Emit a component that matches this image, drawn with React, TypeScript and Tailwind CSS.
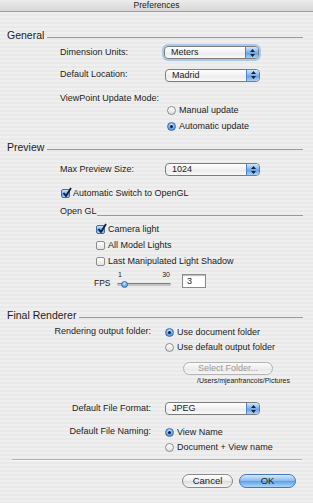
import clsx from "clsx";

function Section({ title }: { title: string }) {
  return (
    <div className="flex h-[14px] items-center pl-[7px] pr-[10px]">
      <span className="text-[10.5px] leading-[14px]">{title}</span>
      <div className="ml-[3px] mt-[5px] h-px flex-1 bg-[#9a9a9a]" />
    </div>
  );
}

function Select({ value, focused }: { value: string; focused?: boolean }) {
  return (
    <div
      className={clsx(
        "flex h-[13px] w-[95px] overflow-hidden rounded-[4px] border border-[#7c7c7c] bg-[linear-gradient(#ffffff,#f1f1f1_50%,#e9e9e9_51%,#fafafa)]",
        focused && "shadow-[0_0_0_2px_#a8c8ec]"
      )}
    >
      <span className="flex-1 pl-[6px] text-[9px] leading-[11px]">{value}</span>
      <span className="flex w-[13px] items-center justify-center rounded-r-[3px] border-l border-[#4f82c6] bg-[linear-gradient(#d3e7fb,#79b0ec_50%,#5b9be4_51%,#a9d2f7)]">
        <svg width="5" height="8" viewBox="0 0 5 8">
          <path d="M2.5 0 L5 3 L0 3 Z M0 5 L5 5 L2.5 8 Z" fill="#13233f" />
        </svg>
      </span>
    </div>
  );
}

function Radio({ checked, label }: { checked?: boolean; label: string }) {
  return (
    <div className="flex items-center gap-[3px]">
      <span
        className={clsx(
          "flex h-[9px] w-[9px] items-center justify-center rounded-full border",
          checked
            ? "border-[#3b6db3] bg-[radial-gradient(circle_at_50%_30%,#d2e6fb,#6ca6e6_55%,#3f83d4)]"
            : "border-[#8d8d8d] bg-[linear-gradient(#ffffff,#dedede)]"
        )}
      >
        {checked && <span className="h-[3px] w-[3px] rounded-full bg-[#0e1d3a]" />}
      </span>
      <span className="leading-[12px]">{label}</span>
    </div>
  );
}

function Check({ checked, label }: { checked?: boolean; label: string }) {
  return (
    <div className="flex items-center gap-[3px]">
      <span
        className={clsx(
          "relative h-[9px] w-[9px] rounded-[2px] border",
          checked
            ? "border-[#3b6db3] bg-[linear-gradient(#d2e6fb,#78aeea_50%,#5a99e2_51%,#a6cff5)]"
            : "border-[#8d8d8d] bg-[linear-gradient(#ffffff,#e4e4e4)]"
        )}
      >
        {checked && (
          <svg className="absolute -top-[3px] left-0" width="10" height="11" viewBox="0 0 10 11">
            <path d="M1.5 6 L4 9 L9 1" stroke="#0f1e3c" strokeWidth="1.8" fill="none" />
          </svg>
        )}
      </span>
      <span className="leading-[12px]">{label}</span>
    </div>
  );
}

export default function App() {
  return (
    <div className="h-[503px] w-[313px] overflow-hidden bg-[repeating-linear-gradient(180deg,#efefef_0px,#efefef_2px,#e9e9e9_2px,#e9e9e9_4px)] font-['Liberation_Sans',Arial,sans-serif] text-[9px] text-[#1c1c1c]">
      <div className="flex h-[12px] items-center justify-center border-b border-[#9c9c9c] bg-[linear-gradient(#ececec,#d6d6d6)] text-[8.5px] leading-[11px]">
        Preferences
      </div>

      <div className="mt-[16px]">
        <Section title="General" />
      </div>
      <div className="mt-[3px] flex h-[15px] items-center pl-[60px]">
        <span className="w-[104px]">Dimension Units:</span>
        <Select value="Meters" focused />
      </div>
      <div className="mt-[8px] flex h-[14px] items-center pl-[60px]">
        <span className="w-[105px]">Default Location:</span>
        <Select value="Madrid" />
      </div>
      <div className="mt-[10px] flex h-[13px] items-center pl-[60px]">ViewPoint Update Mode:</div>
      <div className="flex h-[10px] items-center pl-[167px]">
        <Radio label="Manual update" />
      </div>
      <div className="mt-[6px] flex h-[10px] items-center pl-[167px]">
        <Radio checked label="Automatic update" />
      </div>

      <div className="mt-[9px]">
        <Section title="Preview" />
      </div>
      <div className="mt-[8px] flex h-[15px] items-center pl-[60px]">
        <span className="w-[105px]">Max Preview Size:</span>
        <Select value="1024" />
      </div>
      <div className="mt-[9px] flex h-[14px] items-center pl-[61px]">
        <Check checked label="Automatic Switch to OpenGL" />
      </div>
      <div className="mt-[5px] flex h-[14px] items-center pl-[60px] pr-[10px]">
        <span>Open GL</span>
        <div className="mt-[7px] h-px flex-1 bg-[#9a9a9a]" />
      </div>
      <div className="mt-[3px] flex h-[14px] items-center pl-[96px]">
        <Check checked label="Camera light" />
      </div>
      <div className="mt-[2px] flex h-[14px] items-center pl-[96px]">
        <Check label="All Model Lights" />
      </div>
      <div className="mt-[2px] flex h-[14px] items-center pl-[96px]">
        <Check label="Last Manipulated Light Shadow" />
      </div>
      <div className="mt-[2px] flex h-[22px] pl-[94px]">
        <span className="mt-[8px] w-[23px] text-[8.5px] leading-[10px]">FPS</span>
        <div className="flex w-[54px] flex-col">
          <div className="mt-[1px] flex h-[8px] justify-between px-[1px] text-[7px] leading-[8px]">
            <span>1</span>
            <span>30</span>
          </div>
          <div className="relative flex h-[10px] items-center">
            <div className="h-[3px] w-full rounded-full border-t border-[#7d7d7d] bg-[#c4c4c4]" />
            <span className="absolute left-[4px] top-[2px] h-[7px] w-[7px] rounded-full border border-[#3b6db3] bg-[radial-gradient(circle_at_50%_30%,#d2e6fb,#6ca6e6_60%,#3f83d4)]" />
          </div>
        </div>
        <div className="ml-[11px] mt-[4px] h-[14px] w-[24px] border border-[#8a8a8a] bg-white pl-[4px] leading-[12px] shadow-[inset_0_1px_1px_#bbbbbb]">
          3
        </div>
      </div>

      <div className="mt-[16px]">
        <Section title="Final Renderer" />
      </div>
      <div className="mt-[3px] flex h-[14px] items-center">
        <span className="w-[151px] text-right">Rendering output folder:</span>
        <div className="ml-[14px]">
          <Radio checked label="Use document folder" />
        </div>
      </div>
      <div className="mt-[1px] flex h-[14px] items-center pl-[165px]">
        <Radio label="Use default output folder" />
      </div>
      <div className="mt-[8px] flex h-[13px] pl-[183px]">
        <div className="flex w-[90px] items-center justify-center rounded-full border border-[#b3b3b3] bg-[linear-gradient(#fbfbfb,#eeeeee_50%,#e6e6e6_51%,#f6f6f6)] leading-[11px] text-[#9b9b9b]">
          Select Folder...
        </div>
      </div>
      <div className="mt-[1px] flex h-[10px] items-center pl-[197px] text-[7px]">/Users/mjeanfrancois/Pictures</div>

      <div className="mt-[15px] flex h-[15px] items-center">
        <span className="w-[151px] text-right">Default File Format:</span>
        <div className="ml-[14px]">
          <Select value="JPEG" />
        </div>
      </div>
      <div className="mt-[9px] flex h-[14px] items-center">
        <span className="w-[151px] text-right">Default File Naming:</span>
        <div className="ml-[14px]">
          <Radio checked label="View Name" />
        </div>
      </div>
      <div className="mt-[1px] flex h-[14px] items-center pl-[165px]">
        <Radio label="Document + View name" />
      </div>

      <div className="ml-[12px] mr-[11px] mt-[5px] h-[2px] border-t border-[#b2b2b2] bg-[#fafafa]" />

      <div className="mt-[13px] flex h-[14px] justify-end gap-[6px] pr-[17px] text-[9.5px]">
        <div className="flex w-[51px] items-center justify-center rounded-full border border-[#8a8a8a] bg-[linear-gradient(#ffffff,#ececec_50%,#dcdcdc_51%,#f7f7f7)] leading-[12px]">
          Cancel
        </div>
        <div className="flex w-[57px] items-center justify-center rounded-full border border-[#4777bb] bg-[linear-gradient(#d6e9fb,#86baf0_50%,#5e9fe7_51%,#acd6f9)] leading-[12px]">
          OK
        </div>
      </div>
    </div>
  );
}
